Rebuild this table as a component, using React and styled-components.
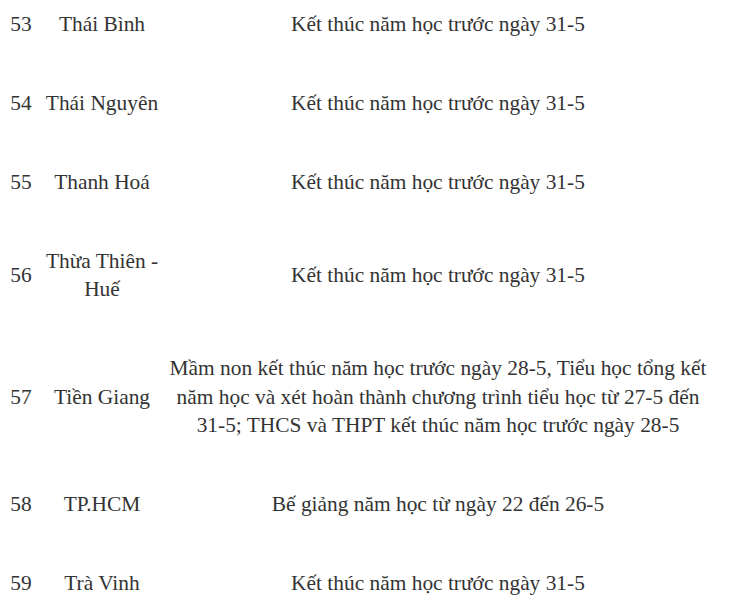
import React from "react";
import styled, { createGlobalStyle } from "styled-components";

const GlobalStyle = createGlobalStyle`
  html, body {
    margin: 0;
    padding: 0;
    background: #fff;
  }
`;

const Wrapper = styled.div`
  width: 750px;
  height: 610px;
  overflow: hidden;
  background: #fff;
`;

const Table = styled.table`
  margin-top: -15.5px;
  width: 714px;
  border-collapse: collapse;
  table-layout: fixed;
  font-family: "Liberation Serif", "Times New Roman", serif;
  font-size: 21.4px;
  line-height: 28.5px;
  color: #333;
`;

const Cell = styled.td`
  padding: 25.25px 3px;
  text-align: center;
  vertical-align: middle;
`;

const rows = [
  ["53", "Thái Bình", "Kết thúc năm học trước ngày 31-5"],
  ["54", "Thái Nguyên", "Kết thúc năm học trước ngày 31-5"],
  ["55", "Thanh Hoá", "Kết thúc năm học trước ngày 31-5"],
  ["56", "Thừa Thiên - Huế", "Kết thúc năm học trước ngày 31-5"],
  [
    "57",
    "Tiền Giang",
    "Mầm non kết thúc năm học trước ngày 28-5, Tiểu học tổng kết năm học và xét hoàn thành chương trình tiểu học từ 27-5 đến 31-5; THCS và THPT kết thúc năm học trước ngày 28-5",
  ],
  ["58", "TP.HCM", "Bế giảng năm học từ ngày 22 đến 26-5"],
  ["59", "Trà Vinh", "Kết thúc năm học trước ngày 31-5"],
];

const App = () => {
  return (
    <Wrapper>
      <GlobalStyle />
      <Table>
        <colgroup>
          <col style={{ width: 42 }} />
          <col style={{ width: 120 }} />
          <col />
        </colgroup>
        <tbody>
          {rows.map(([num, name, note]) => (
            <tr key={num}>
              <Cell>{num}</Cell>
              <Cell>{name}</Cell>
              <Cell>{note}</Cell>
            </tr>
          ))}
        </tbody>
      </Table>
    </Wrapper>
  );
};

export default App;
